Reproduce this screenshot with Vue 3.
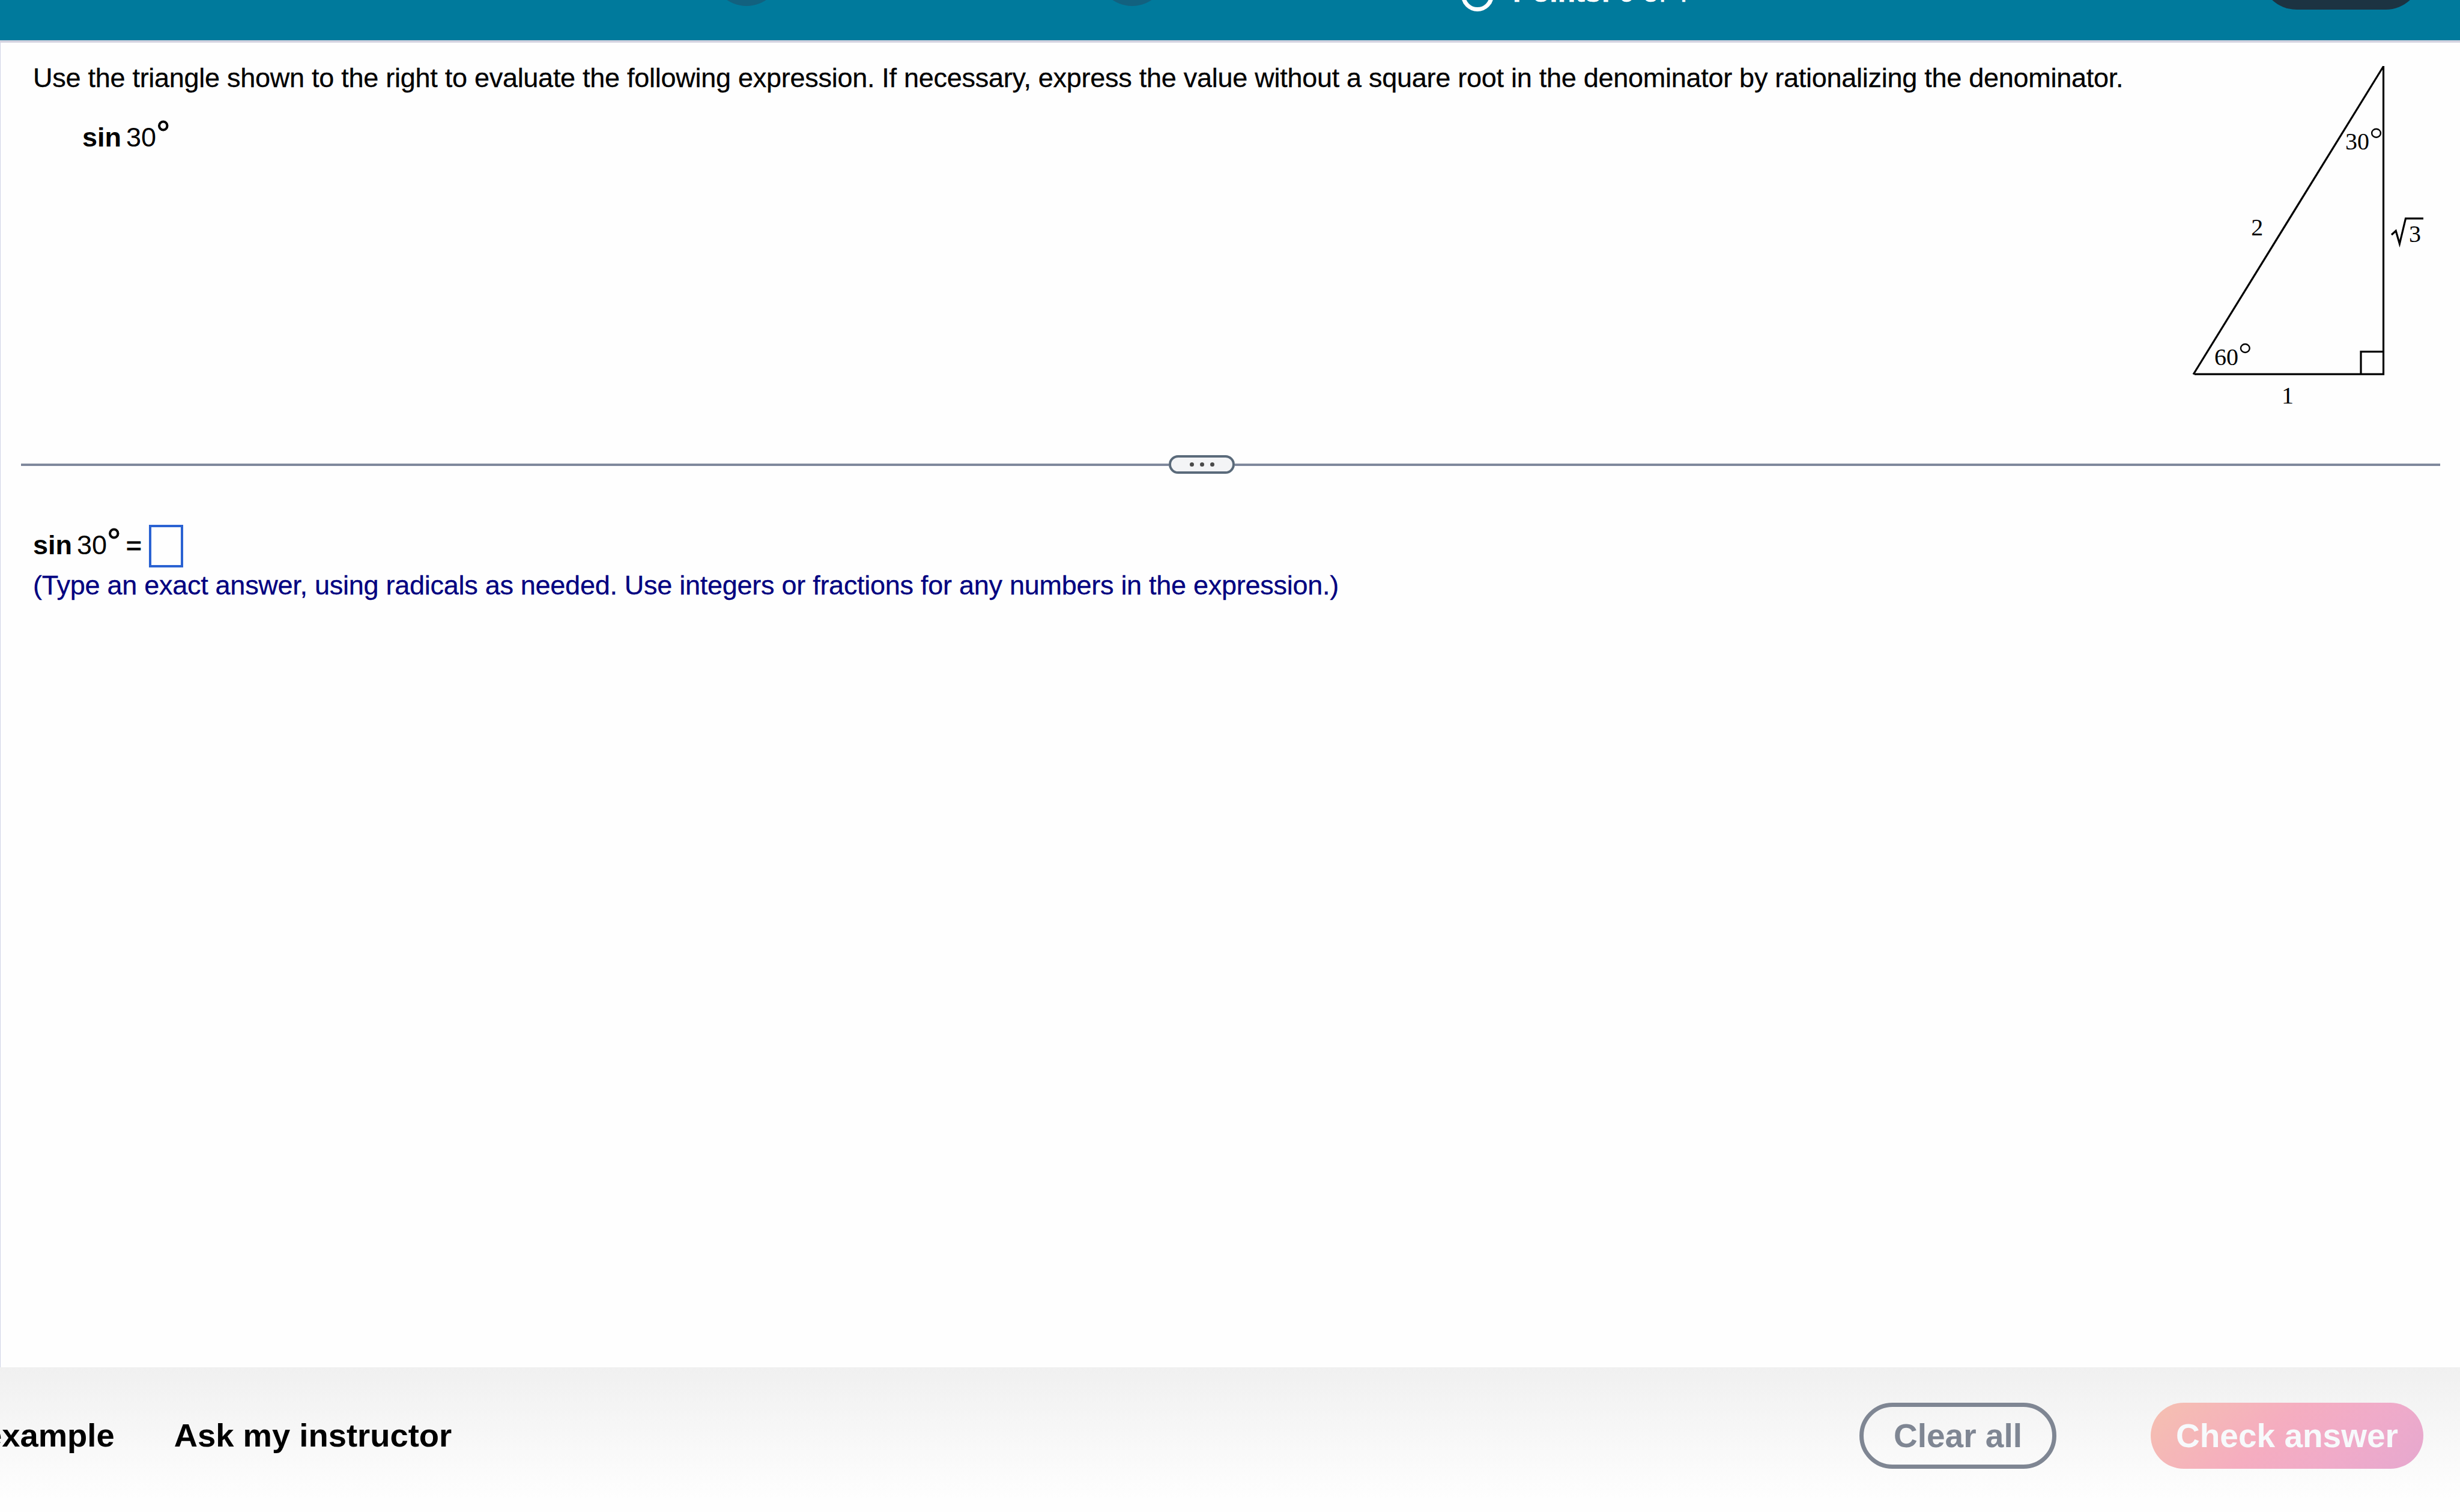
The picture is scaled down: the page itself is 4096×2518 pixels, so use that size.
<template>
  <div class="player">
    <header class="toolbar">
      <span class="nav-circle nav-prev"></span>
      <span class="nav-circle nav-next"></span>
      <span class="score-ring"></span>
      <span class="points"><b>Points:</b> 0 of <span class="total">1</span></span>
      <span class="save-pill"></span>
    </header>

    <main class="content">
      <section class="question">
        <div class="prompt">
          <p class="text">{{ prompt }}</p>
          <div class="expression">
            <b>sin</b><span class="angle">30</span><span class="degree">°</span>
          </div>
        </div>

        <svg class="figure" width="420" height="590" viewBox="0 0 420 590">
          <g fill="none" stroke="#000" stroke-width="3.2">
            <path d="M12 523.5 L328.5 10.5" />
            <path d="M328.5 10 V523.2 H14" />
            <path d="M291 523 V485.6 H328" />
            <path d="M342 291 L349.2 284.5 L355.4 306 L365.5 263.8 H395" />
            <ellipse cx="316.5" cy="121.7" rx="7.4" ry="7" stroke-width="2.4" />
            <ellipse cx="98.3" cy="480" rx="7.4" ry="7" stroke-width="2.4" />
          </g>
          <text v-for="label in labels" :key="label.id" :x="label.x" :y="label.y">{{ label.text }}</text>
        </svg>
      </section>

      <div class="divider">
        <button class="handle"><i></i><i></i><i></i></button>
      </div>

      <section class="answer">
        <div class="expression">
          <b>sin</b><span class="angle">30</span><span class="degree">°</span><span class="equals">=</span>
          <span class="answer-box"></span>
        </div>
        <p class="hint">{{ hint }}</p>
      </section>
    </main>

    <footer class="footer">
      <a class="link link-example">example</a>
      <a class="link">Ask my instructor</a>
      <button class="btn btn-clear">Clear all</button>
      <button class="btn btn-check">Check answer</button>
    </footer>
  </div>
</template>

<script setup>
const prompt =
  'Use the triangle shown to the right to evaluate the following expression. If necessary, express the value without a square root in the denominator by rationalizing the denominator.'

const hint =
  '(Type an exact answer, using radicals as needed. Use integers or fractions for any numbers in the expression.)'

const labels = [
  { id: 'top', text: '30', x: 265, y: 149 },
  { id: 'left', text: '60', x: 47, y: 507.5 },
  { id: 'hypotenuse', text: '2', x: 108.3, y: 292.4 },
  { id: 'height', text: '3', x: 371, y: 303 },
  { id: 'base', text: '1', x: 159, y: 572 },
]
</script>

<style>
body {
  margin: 0;
  background: #fefefe;
}
</style>

<style scoped>
.player {
  display: flex;
  flex-direction: column;
  width: 4096px;
  height: 2518px;
  overflow: hidden;
  font-family: "Liberation Sans", Arial, sans-serif;
  color: #000;
}

/* toolbar */
.toolbar {
  box-sizing: border-box;
  display: flex;
  flex-shrink: 0;
  align-items: flex-start;
  height: 71px;
  overflow: hidden;
  background: #007a9c;
  border-bottom: 4px solid #d3d3e0;
}

.toolbar > * {
  box-sizing: border-box;
  flex-shrink: 0;
}

.nav-circle {
  width: 116px;
  height: 116px;
  margin-top: -106px;
  border-radius: 50%;
  background: #12617f;
}

.nav-prev {
  margin-left: 1185px;
}

.nav-next {
  margin-left: 526px;
}

.score-ring {
  width: 54px;
  height: 54px;
  margin: -35px 0 0 490px;
  border: 7px solid #fff;
  border-radius: 50%;
}

.points {
  margin: -37px 0 0 32px;
  font-size: 48px;
  line-height: 48px;
  color: #fff;
  white-space: nowrap;
  -webkit-text-stroke: 0.6px #fff;
}

.total {
  font-family: Roboto, sans-serif;
}

.save-pill {
  width: 268px;
  height: 120px;
  margin: -104px 64px 0 auto;
  border-radius: 60px;
  background: #1c3342;
}

/* content */
.content {
  flex: 1;
  border-left: 1px solid #cfd3e6;
}

.question {
  display: flex;
  justify-content: space-between;
  box-sizing: border-box;
  height: 687px;
  padding: 29px 36px 0 54px;
}

.text,
.hint {
  margin: 0;
  font-size: 45px;
  line-height: 52px;
  letter-spacing: -0.27px;
  white-space: nowrap;
  -webkit-text-stroke: 0.3px currentColor;
}

.prompt .text {
  padding-top: 4px;
}

.expression {
  display: flex;
  height: 52px;
  font-size: 45px;
  line-height: 52px;
}

.prompt .expression {
  margin: 47px 0 0 82px;
}

.angle {
  margin-left: 8px;
}

.degree {
  margin-top: -6px;
  font-size: 59px;
  -webkit-text-stroke: 0.9px #000;
}

.equals {
  margin-left: 8px;
  -webkit-text-stroke: 0.8px #000;
}

.figure {
  flex-shrink: 0;
  font-family: "Liberation Serif", "Times New Roman", serif;
  font-size: 40px;
}

.divider {
  display: flex;
  align-items: center;
  height: 31px;
  margin: 0 33px 0 34px;
}

.divider::before,
.divider::after {
  content: "";
  height: 4px;
  background: #7f889c;
}

.divider::before {
  width: 1911px;
}

.divider::after {
  flex: 1;
}

.handle {
  display: flex;
  align-items: center;
  justify-content: center;
  gap: 10px;
  box-sizing: border-box;
  width: 110px;
  height: 31px;
  padding: 0;
  border: 4px solid #5a6a7a;
  border-radius: 16px;
  background: #f3f4f6;
}

.handle i {
  width: 7px;
  height: 7px;
  border-radius: 50%;
  background: #4a4a4a;
}

.answer {
  padding: 93px 0 0 54px;
}

.answer-box {
  box-sizing: border-box;
  width: 57px;
  height: 71px;
  margin: -8px 0 0 12px;
  border: 4px solid #2a62d2;
}

.hint {
  margin-top: 15px;
  color: #000080;
}

/* footer */
.footer {
  display: flex;
  flex-shrink: 0;
  box-sizing: border-box;
  height: 241px;
  padding: 59px 61px 0 0;
  background: linear-gradient(#f0f0f0, #fefefe 92%);
}

.link {
  font-size: 54.4px;
  font-weight: bold;
  line-height: 110px;
  white-space: nowrap;
}

.link-example {
  margin: 0 99px 0 -27px;
}

.btn {
  box-sizing: border-box;
  height: 110px;
  padding: 0;
  border: 0;
  border-radius: 55px;
  font: bold 55px "Liberation Sans", Arial, sans-serif;
  white-space: nowrap;
}

.btn-clear {
  width: 328px;
  margin-left: auto;
  border: 7px solid #7f8693;
  background: transparent;
  color: #7f8693;
}

.btn-check {
  width: 454px;
  margin-left: 157px;
  background: linear-gradient(135deg, #f5c0b0, #f5adc0 45%, #f0abc9 70%, #e6a8cf);
  color: #f7fafc;
}
</style>
